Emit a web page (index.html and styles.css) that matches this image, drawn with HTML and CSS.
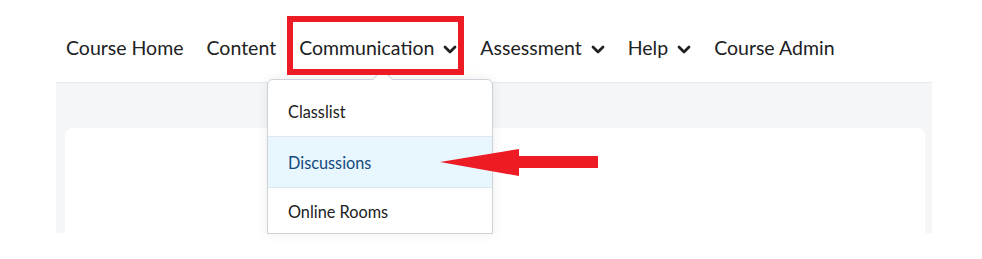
FILE: index.html
```html
<!DOCTYPE html>
<html lang="en">
<head>
    <meta charset="UTF-8">
    <title>Course Navigation</title>
    <link rel="stylesheet" href="styles.css">
</head>
<body>
<div class="page">
    <!-- Course navbar -->
    <nav class="navbar">
        <a class="nav-item">Course Home</a>
        <a class="nav-item">Content</a>
        <a class="nav-item nav-marked">Communication
            <svg class="chevron" width="14" height="9" viewBox="0 0 14 9"><path d="M2 2 L7 7 L12 2" /></svg>
        </a>
        <a class="nav-item">Assessment
            <svg class="chevron" width="14" height="9" viewBox="0 0 14 9"><path d="M2 2 L7 7 L12 2" /></svg>
        </a>
        <a class="nav-item">Help
            <svg class="chevron" width="14" height="9" viewBox="0 0 14 9"><path d="M2 2 L7 7 L12 2" /></svg>
        </a>
        <a class="nav-item">Course Admin</a>
    </nav>

    <div class="content">
        <div class="card"></div>
    </div>

    <!-- Communication dropdown -->
    <ul class="dropdown">
        <li class="dropdown-item">Classlist</li>
        <li class="dropdown-item active">Discussions</li>
        <li class="dropdown-item last">Online Rooms</li>
    </ul>

    <!-- Annotation arrow -->
    <svg class="arrow" width="160" height="30" viewBox="0 0 160 30">
        <polygon points="0,14 79,1 79,8 158,8 158,20 79,20 79,28" />
    </svg>
</div>
</body>
</html>
```

FILE: styles.css
```css
body {
    margin: 0;
    background-color: #fff;
    font-family: Lato, "Open Sans", sans-serif;
    color: #202122;
}
.page {
    position: relative;
    width: 876px;
    margin-left: 56px;
    height: 259px;
}
.navbar {
    display: flex;
    align-items: center;
    gap: 23px;
    box-sizing: border-box;
    height: 82px;
    padding: 14px 0 0 10px;
}
.nav-item {
    display: flex;
    align-items: center;
    font-size: 19.5px;
    line-height: 24px;
    color: #202122;
    white-space: nowrap;
}
.chevron {
    margin-left: 9px;
    margin-top: 2px;
}
.chevron path {
    fill: none;
    stroke: #202122;
    stroke-width: 2.8;
    stroke-linecap: round;
    stroke-linejoin: round;
}
.nav-marked {
    position: relative;
}
.nav-marked::after {
    content: "";
    position: absolute;
    top: -20px;
    bottom: -15px;
    left: -12px;
    right: -7px;
    border: 6px solid #ed1c24;
    z-index: 3;
}
.content {
    box-sizing: border-box;
    height: 151px;
    background-color: #f5f6f8;
    border-top: 1px solid #e6e8ea;
    padding: 45px 7px 0 9px;
}
.card {
    height: 100%;
    background-color: #fff;
    border-radius: 8px 8px 0 0;
}
.dropdown {
    position: absolute;
    left: 211px;
    top: 79px;
    width: 224px;
    margin: 0;
    padding: 6px 0 0;
    list-style: none;
    background-color: #fff;
    border: 1px solid #cdd3d9;
    border-radius: 6px 6px 0 0;
    box-shadow: 0 0 12px rgba(0, 0, 0, 0.08);
    z-index: 2;
}
.dropdown::before {
    content: "";
    position: absolute;
    left: 107px;
    top: -8px;
    width: 14px;
    height: 14px;
    background-color: #fff;
    border-top: 1px solid #cdd3d9;
    border-left: 1px solid #cdd3d9;
    transform: rotate(45deg);
}
.dropdown-item {
    position: relative;
    display: flex;
    align-items: center;
    box-sizing: border-box;
    height: 51px;
    padding-left: 20px;
    font-size: 16.3px;
    border-bottom: 1px solid #dfe6ee;
}
.dropdown-item.active {
    background-color: #e8f6fd;
    color: #154a80;
}
.dropdown-item.last {
    height: 45px;
    border-bottom: none;
    padding-top: 2px;
}
.arrow {
    position: absolute;
    left: 384px;
    top: 148px;
    z-index: 4;
}
.arrow polygon {
    fill: #ed1c24;
}
```
